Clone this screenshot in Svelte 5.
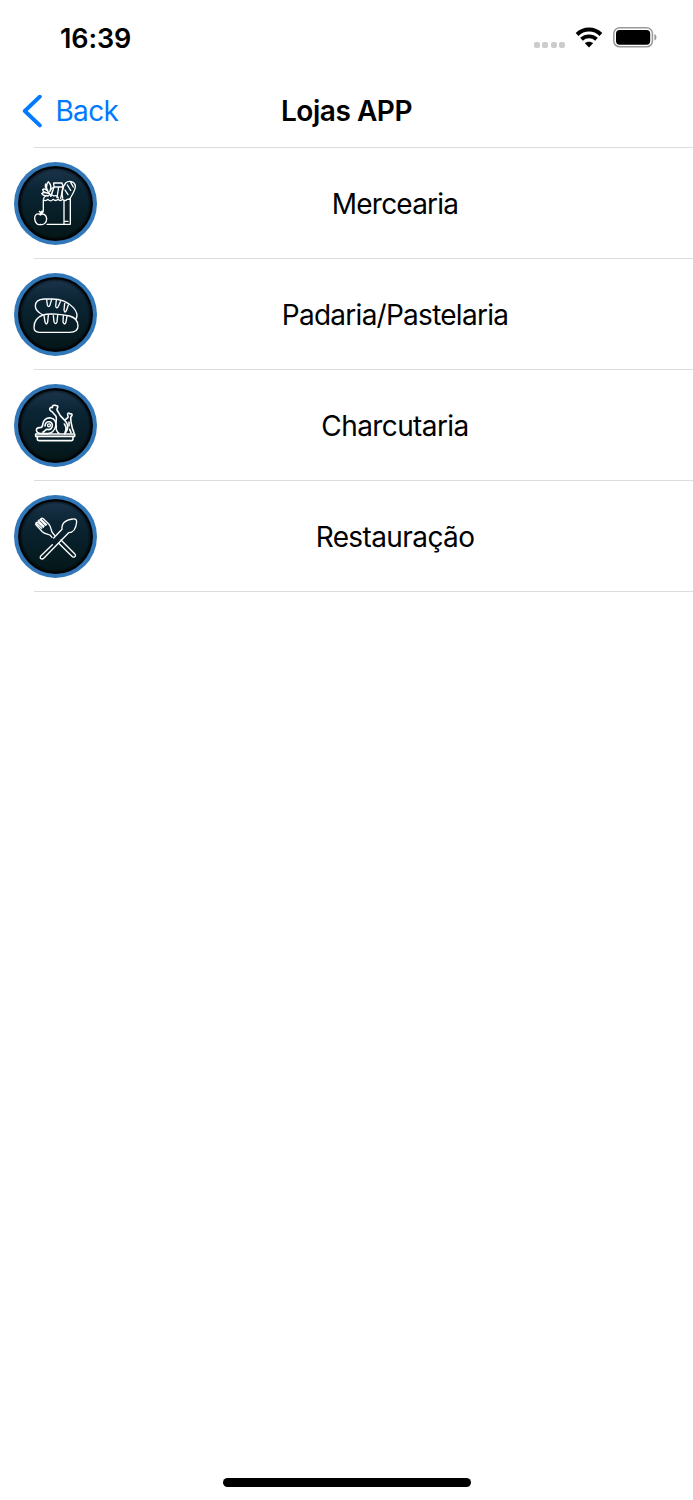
<script>
  const stores = [
    { icon: 'grocery', label: 'Mercearia', spacing: -0.8 },
    { icon: 'bakery', label: 'Padaria/Pastelaria', spacing: -0.74 },
    { icon: 'meat', label: 'Charcutaria', spacing: -0.6 },
    { icon: 'cutlery', label: 'Restauração', spacing: -0.6 },
  ]
</script>

<div class="screen">
  <header>
    <div class="status">
      <span class="time">16:39</span>
      <div class="indicators">
        <div class="dots"><i></i><i></i><i></i><i></i></div>
        <svg class="wifi" width="28" height="22" viewBox="0 0 28 22">
          <path d="M2.1 7.5C8.7.9 19.3.9 25.9 7.5" stroke-width="4" />
          <path d="M6.5 12.3C10.7 8.4 17.3 8.4 21.5 12.3" stroke-width="3.9" />
          <path class="solid" d="M14 20.4 9.9 16.3c2.1-2 6.1-2 8.2 0z" />
        </svg>
        <svg width="44" height="22" viewBox="0 0 44 22">
          <rect x=".8" y=".8" width="38.6" height="19" rx="5.8" fill="none" stroke="#999" stroke-width="1.5" />
          <rect x="3" y="3" width="34.2" height="14.7" rx="3.7" />
          <path d="M41.4 7.1c2.7 1 2.7 5.5 0 6.5z" fill="#999" />
        </svg>
      </div>
    </div>
    <nav>
      <div class="back">
        <svg width="20" height="34" viewBox="0 0 20 34">
          <path d="M17.8 2.7 2.8 17l15 14.4" />
        </svg>
        <span>Back</span>
      </div>
      <h1>Lojas APP</h1>
    </nav>
  </header>

  <ul>
    {#each stores as store}
      <li>
        <svg class="badge" width="83" height="83" viewBox="18 17 249 249">
          <defs>
            <linearGradient id="face-{store.icon}" x1="0" y1="0" x2="0" y2="1">
              <stop offset="0" stop-color="#1b344b" />
              <stop offset=".3" stop-color="#0b2535" />
              <stop offset="1" stop-color="#041718" />
            </linearGradient>
            <radialGradient id="shade-{store.icon}">
              <stop offset=".88" stop-color="#000" stop-opacity="0" />
              <stop offset="1" stop-color="#000" stop-opacity=".7" />
            </radialGradient>
          </defs>
          <circle cx="142.5" cy="141.5" r="124.5" fill="#3277b8" />
          <circle cx="142.5" cy="141.5" r="112.5" fill="#02080d" />
          <circle cx="142.5" cy="141.5" r="106" fill="url(#face-{store.icon})" />
          <circle cx="142.5" cy="141.5" r="110" fill="url(#shade-{store.icon})" />
          <g class="line">
            {#if store.icon === 'grocery'}
              <path d="M106 161v-31q7 6 14-1 7 9 15 0 8 7 15 0 7 7 14 0 7 8 13 0l10-1v76h-70M168 131v73M171 195h9" />
              <path d="M164 125C160 108 165 90 173 80c9-9 27-5 29 8 1 14-8 25-17 40M188 78l8 14M178 86l10 16M171 101l9 14" />
              <path d="M128 120l10-28h28l-8 34M138 92l-1-12h25l4 12M138 92l-9 28M152 92l-5 32" />
              <path d="M125 113c-11-12-13-27-4-37 9 9 9 19 5 28M125 106q5-11 11-13M113 83q-4 9 6 18M120 105q-11-11-16-5 1 9 12 9M122 112q-14-7-21 0 6 8 16 5M107 127q3-11 13-8 8-8 17 0 10-4 14 6" />
              <path d="M97 176c-10-8-18 0-17 11 1 12 9 21 17 17 10 4 19-6 19-17-1-11-10-18-19-11zm0-2q1-6-3-9M97 171q2-8 9-7-1 7-9 7" />
            {:else if store.icon === 'bakery'}
              <path d="M105 143C91 136 82 127 82 116c0-13 12-20 26-21h24c27 0 49 10 64 26 10 11 14 23 8 35M105 143C122 137 163 141 185 146c14 4 25 14 25 30 0 13-10 19-25 19H94c-11 0-16-6-16-15 0-18 10-31 27-37z" />
              <path d="M116 97l2 16q4 10 8 0l5-17M145 98l-2 18q2 11 8 1l6-14M170 108l-2 20q2 11 7 2l6-17M108 145l3 19q4 12 8 0l2-20M136 145l2 18q5 12 9 0l2-19M166 145l-1 19q5 12 9 0l3-18" />
            {:else if store.icon === 'meat'}
              <path class="bold" d="M83 167h117v7H83zM88 174v8q0 5 6 5h95q6 0 6-5v-8" />
              <path class="bold" d="M104 139c1-14 12-22 24-20 12 2 18 13 15 25-3 12-13 21-23 22H98c-16-1-17-19-3-18 8 0 9-3 9-9zM111 143c1-15 19-17 22-4 2 11-8 17-16 14-5 0-6 7-12 8" />
              <circle cx="123" cy="141" r="4.5" />
              <path class="bold" d="M133 101c-4-3-9-4-8-10 1-4 5-5 8-3 0-7 4-8 8-7l8 2c2 5-3 7-2 12l6 10c3 12 23 19 26 37 1 10-3 18-9 24M133 101l11 13c4 10-2 17 0 26M145 143c-2 10 1 17 8 22M169 137q9 12 2 25" />
              <path class="bold" d="M173 123l7-6c2-4-4-9 0-12 3-2 5 0 6 2 4-2 7 0 6 4-1 3-4 4-4 7l1 12c2 12 3 22 9 33M183 131v12M185 153l4 10" />
            {:else}
              <path d="M133 166 99 199c-7 9 3 13 9 7l74-76c13 0 22-12 24-32 0-8-4-10-12-9-22 2-34 14-32 31l-25 26" />
              <path d="M84 101l17 16M84 101q3-4 7-1l15 14M91 94l17 17M91 94q3-4 7-1l15 15M98 89l18 17M98 89q4-4 8-1l17 17c8 10 5 19 11 26l6 7M84 101q-3 4 1 7l18 19c8 8 18 6 24 11l5 6M159 152l41 41c7 8-3 14-9 7l-39-38" />
            {/if}
          </g>
        </svg>
        <span class="label" style="letter-spacing: {store.spacing}px">{store.label}</span>
      </li>
    {/each}
  </ul>

  <div class="home"></div>
</div>

<style>
  :global(body) {
    margin: 0;
    background: #fff;
  }
  .screen {
    display: flex;
    flex-direction: column;
    height: 1500px;
    color: #000;
    background: #fff;
    font-family: Inter, 'Liberation Sans', sans-serif;
    overflow: hidden;
  }
  header {
    display: flex;
    flex-direction: column;
    height: 147px;
  }
  .status {
    display: flex;
    align-items: center;
    justify-content: space-between;
    height: 76px;
    padding: 0 36px 0 60px;
  }
  .time {
    font-size: 27px;
    font-weight: 600;
    letter-spacing: -0.1px;
  }
  .indicators {
    display: flex;
    align-items: center;
  }
  .dots {
    display: flex;
    gap: 2.4px;
    margin: 13px 10px 0 0;
  }
  .dots i {
    width: 6px;
    height: 6px;
    border-radius: 2px;
    background: #ccc;
  }
  .wifi {
    margin-right: 10px;
    fill: none;
    stroke: #000;
  }
  .wifi .solid {
    fill: #000;
    stroke: none;
  }
  nav {
    display: grid;
    grid-template-columns: 1fr auto 1fr;
    align-items: center;
    height: 70px;
  }
  .back {
    display: flex;
    align-items: center;
    gap: 14px;
    padding-left: 21.5px;
    color: #007aff;
    font-size: 28px;
    letter-spacing: -0.7px;
  }
  .back svg {
    fill: none;
    stroke: currentColor;
    stroke-width: 3.9;
    stroke-linecap: round;
    stroke-linejoin: round;
  }
  h1 {
    margin: 0;
    font-size: 28px;
    font-weight: 600;
    letter-spacing: -0.45px;
  }
  ul {
    flex: 1;
    margin: 0 0 0 33.5px;
    padding: 0;
    border-top: 1px solid #dcdcde;
    list-style: none;
  }
  li {
    display: flex;
    align-items: center;
    height: 110px;
    border-bottom: 1px solid #dcdcde;
  }
  .badge {
    flex: none;
    margin-left: -19.5px;
  }
  .line {
    fill: none;
    stroke: #fff;
    stroke-width: 4;
    stroke-linecap: round;
    stroke-linejoin: round;
  }
  .bold {
    stroke-width: 4.8;
  }
  .label {
    flex: 1;
    padding-top: 2px;
    font-size: 28px;
    text-align: center;
  }
  .home {
    align-self: center;
    width: 248px;
    height: 9px;
    margin-bottom: 13px;
    border-radius: 5px;
    background: #000;
  }
</style>
